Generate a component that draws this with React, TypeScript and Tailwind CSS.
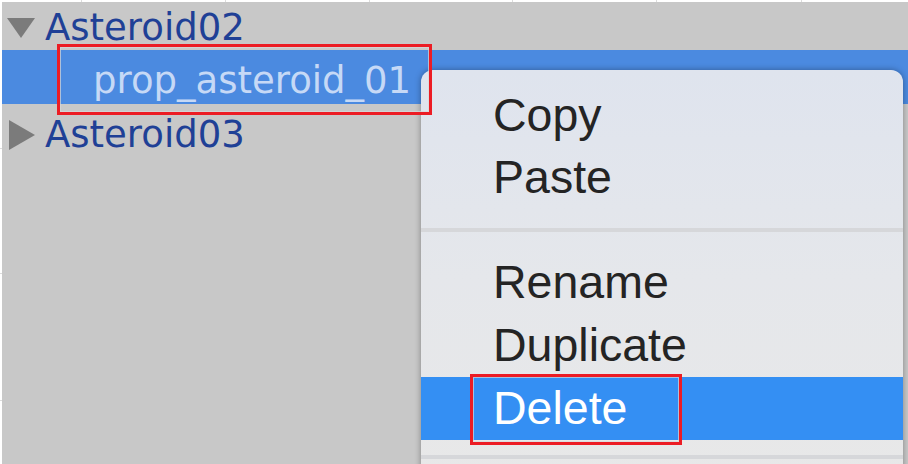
import React from "react";

const treeFont = { fontFamily: '"DejaVu Sans", Verdana, sans-serif' };
const menuFont = { fontFamily: '"Liberation Sans", Arial, sans-serif' };

function TriDown() {
  return (
    <svg width="28" height="22" viewBox="0 0 28 22" className="shrink-0">
      <polygon points="0,1 28,1 14,21" fill="#7b7b7b" />
    </svg>
  );
}

function TriRight() {
  return (
    <svg width="28" height="30" viewBox="0 0 28 30" className="shrink-0">
      <polygon points="1,0 27,15 1,30" fill="#7b7b7b" />
    </svg>
  );
}

function MenuItem({ label, active = false, h = "h-[62px]" }: { label: string; active?: boolean; h?: string }) {
  return (
    <div
      className={`${h} flex items-center pl-[72px] ${active ? "bg-[#348ff3] text-white" : "text-[#242424]"}`}
    >
      <span className="text-[46.5px] leading-none" style={menuFont}>
        {label}
      </span>
    </div>
  );
}

export default function App() {
  return (
    <div className="w-[908px] h-[464px] bg-white flex flex-col overflow-hidden">
      {/* top strip with ticks */}
      <div className="h-[2px] flex shrink-0">
        <div className="w-[81px]" />
        <div className="w-px bg-[#dcdcdc]" />
        <div className="w-[143px]" />
        <div className="w-px bg-[#dcdcdc]" />
        <div className="w-[143px]" />
        <div className="w-px bg-[#dcdcdc]" />
        <div className="w-[142px]" />
        <div className="w-px bg-[#dcdcdc]" />
        <div className="w-[143px]" />
        <div className="w-px bg-[#dcdcdc]" />
        <div className="w-[144px]" />
        <div className="w-px bg-[#dcdcdc]" />
      </div>
      <div className="flex flex-1 min-h-0">
        {/* left strip with ticks */}
        <div className="w-[2px] flex flex-col shrink-0">
          <div className="h-[146px]" />
          <div className="h-px bg-[#dcdcdc]" />
          <div className="h-[124px]" />
          <div className="h-px bg-[#dcdcdc]" />
          <div className="h-[126px]" />
          <div className="h-px bg-[#dcdcdc]" />
        </div>

        {/* panel */}
        <div className="flex-1 bg-[#c8c8c8] relative overflow-hidden">
          <div className="flex flex-col" style={treeFont}>
            <div className="h-[48px] flex items-start pt-[7px] pl-[5px]">
              <div className="h-[37px] flex items-center">
                <TriDown />
              </div>
              <span className="ml-[10px] text-[37px] leading-none text-[#1f4096]">Asteroid02</span>
            </div>
            <div className="h-[54px] bg-[#4b8ae0] pt-[12px] pl-[91px]">
              <span className="text-[37px] leading-none text-[#c6d9f6] block">prop_asteroid_01</span>
            </div>
            <div className="h-[54px] flex items-start pt-[12px] pl-[6px]">
              <div className="h-[37px] flex items-center">
                <TriRight />
              </div>
              <span className="ml-[9px] text-[37px] leading-none text-[#1f4096]">Asteroid03</span>
            </div>
          </div>

          {/* context menu */}
          <div className="absolute left-[419px] top-[68px] w-[482px] bottom-[-20px] rounded-t-[12px] bg-linear-to-b from-[#dfe4ee] via-[#e5e7eb] to-[#e8e8e8] shadow-[0_0_6px_rgba(0,0,0,0.35)] pt-[14px] flex flex-col">
            <MenuItem label="Copy" />
            <MenuItem label="Paste" />
            <div className="pt-[20px] pb-[19px]">
              <div className="h-[4px] bg-[#d6d7da]" />
            </div>
            <MenuItem label="Rename" h="h-[63px]" />
            <MenuItem label="Duplicate" h="h-[63px]" />
            <MenuItem label="Delete" h="h-[63px]" active />
            <div className="pt-[15px]">
              <div className="h-[4px] bg-[#d6d7da]" />
            </div>
          </div>

          {/* red annotation boxes */}
          <div className="absolute left-[55px] top-[42px] w-[375px] h-[71px] border-[3px] border-[#ec1c24] shadow-[inset_0_0_0_1px_rgba(215,215,215,0.7)]" />
          <div className="absolute left-[468px] top-[372px] w-[212px] h-[71px] border-[3px] border-[#ec1c24] shadow-[inset_0_0_0_1px_rgba(215,215,215,0.7)]" />
        </div>
      </div>
    </div>
  );
}
